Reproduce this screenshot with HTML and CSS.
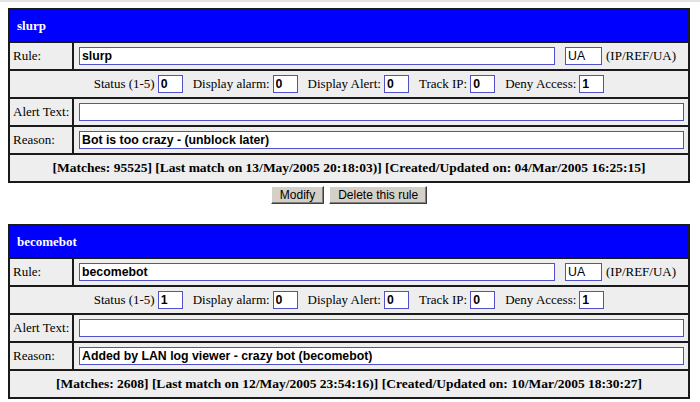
FILE: index.html
```html
<!DOCTYPE html>
<html>
<head>
<meta charset="utf-8">
<link rel="stylesheet" href="styles.css">
</head>
<body>
<div class="page">
  <form class="rule-form">
    <div class="rule">
      <div class="rule-head">slurp</div>
      <div class="row split">
        <div class="label">Rule:</div>
        <div class="field">
          <input class="inp rule-inp" type="text" value="slurp">
          <input class="inp type-inp" type="text" value="UA">
          <span class="hint">(IP/REF/UA)</span>
        </div>
      </div>
      <div class="row flags">
        <span class="flag">Status (1-5) <input class="inp small" type="text" value="0"></span>
        <span class="flag">Display alarm: <input class="inp small" type="text" value="0"></span>
        <span class="flag">Display Alert: <input class="inp small" type="text" value="0"></span>
        <span class="flag">Track IP: <input class="inp small" type="text" value="0"></span>
        <span class="flag">Deny Access: <input class="inp small" type="text" value="1"></span>
      </div>
      <div class="row split">
        <div class="label">Alert Text:</div>
        <div class="field"><input class="inp wide" type="text" value=""></div>
      </div>
      <div class="row split">
        <div class="label">Reason:</div>
        <div class="field"><input class="inp wide" type="text" value="Bot is too crazy - (unblock later)"></div>
      </div>
      <div class="row stats">[Matches: 95525] [Last match on 13/May/2005 20:18:03)] [Created/Updated on: 04/Mar/2005 16:25:15]</div>
    </div>
    <div class="actions">
      <button type="button" class="btn">Modify</button>
      <button type="button" class="btn">Delete this rule</button>
    </div>
  </form>

  <form class="rule-form">
    <div class="rule">
      <div class="rule-head">becomebot</div>
      <div class="row split">
        <div class="label">Rule:</div>
        <div class="field">
          <input class="inp rule-inp" type="text" value="becomebot">
          <input class="inp type-inp" type="text" value="UA">
          <span class="hint">(IP/REF/UA)</span>
        </div>
      </div>
      <div class="row flags">
        <span class="flag">Status (1-5) <input class="inp small" type="text" value="1"></span>
        <span class="flag">Display alarm: <input class="inp small" type="text" value="0"></span>
        <span class="flag">Display Alert: <input class="inp small" type="text" value="0"></span>
        <span class="flag">Track IP: <input class="inp small" type="text" value="0"></span>
        <span class="flag">Deny Access: <input class="inp small" type="text" value="1"></span>
      </div>
      <div class="row split">
        <div class="label">Alert Text:</div>
        <div class="field"><input class="inp wide" type="text" value=""></div>
      </div>
      <div class="row split">
        <div class="label">Reason:</div>
        <div class="field"><input class="inp wide" type="text" value="Added by LAN log viewer - crazy bot (becomebot)"></div>
      </div>
      <div class="row stats">[Matches: 2608] [Last match on 12/May/2005 23:54:16)] [Created/Updated on: 10/Mar/2005 18:30:27]</div>
    </div>
    <div class="actions">
      <button type="button" class="btn">Modify</button>
      <button type="button" class="btn">Delete this rule</button>
    </div>
  </form>
</div>
</body>
</html>
```
FILE: styles.css
```css
html {
  border-top: 2px solid #e2e2e2;
  background: #ffffff;
}
body {
  margin: 6px 8px 8px 8px;
  font-family: "Liberation Serif", "Times New Roman", serif;
  font-size: 13px;
  color: #000;
}
.page {
  display: flex;
  flex-direction: column;
}
.rule-form {
  display: flex;
  flex-direction: column;
  margin: 0 0 20px 0;
}
.rule {
  width: 678px;
  border: 2px solid #1a1a1a;
  background: #eeeeee;
}
.rule-head {
  height: 31px;
  background: #0000ff;
  color: #ffffff;
  font-weight: bold;
  font-size: 13px;
  display: flex;
  align-items: center;
  padding-left: 7px;
}
.row {
  border-top: 2px solid #1a1a1a;
  height: 26px;
}
.split {
  display: grid;
  grid-template-columns: 64px 1fr;
}
.label {
  border-right: 2px solid #1a1a1a;
  display: flex;
  align-items: center;
  padding-left: 3px;
}
.field {
  display: flex;
  align-items: center;
  padding-left: 5px;
  padding-right: 4px;
}
.inp {
  box-sizing: border-box;
  height: 18px;
  border: 1px solid #5050c8;
  background: #ffffff;
  font-family: "Liberation Sans", Arial, sans-serif;
  font-weight: bold;
  font-size: 12.3px;
  color: #000;
  padding: 0 2px;
  margin: 0;
  outline: none;
}
.rule-inp {
  width: 476px;
}
.type-inp {
  width: 37px;
  margin-left: 10px;
  font-weight: normal;
}
.hint {
  margin-left: 4px;
}
.wide {
  flex: 1;
  width: 100%;
}
.flags {
  display: flex;
  align-items: center;
  justify-content: center;
  gap: 10px;
  font-size: 13px;
}
.flag {
  display: flex;
  align-items: center;
  gap: 3px;
}
.small {
  width: 25px;
}
.stats {
  display: flex;
  align-items: center;
  justify-content: center;
  font-weight: bold;
  font-size: 13.5px;
}
.actions {
  width: 682px;
  display: flex;
  justify-content: center;
  gap: 5px;
  margin-top: 3px;
}
.btn {
  box-sizing: border-box;
  height: 18px;
  padding: 0 8px;
  margin: 0;
  font-family: "Liberation Sans", Arial, sans-serif;
  font-size: 12px;
  color: #000;
  background: #d4d0c8;
  border: 1px solid;
  border-color: #ffffff #404040 #404040 #ffffff;
  box-shadow: inset -1px -1px 0 #808080;
}
```
